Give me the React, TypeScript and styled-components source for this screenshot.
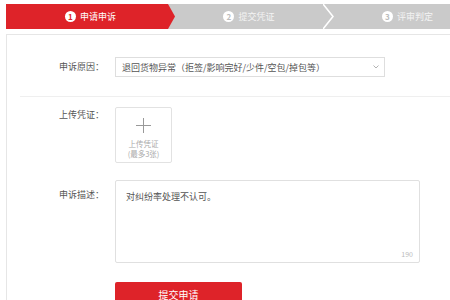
import React from "react";
import styled, { createGlobalStyle } from "styled-components";

const GlobalStyle = createGlobalStyle`
  html, body {
    margin: 0;
    padding: 0;
    background: #fff;
    overflow: hidden;
  }
  body {
    font-family: "Noto Sans CJK SC", "Noto Sans", "Liberation Sans", sans-serif;
    color: #555;
  }
`;

const Page = styled.div`
  width: 450px;
  height: 300px;
  padding: 4px 0 0 6px;
  box-sizing: border-box;
  overflow: hidden;
`;

const StepBar = styled.div`
  display: flex;
  width: 480px;
  height: 25px;
  background: #cacaca;
`;

const Step = styled.div<{ $active?: boolean; $width: number }>`
  display: flex;
  align-items: center;
  justify-content: center;
  gap: 4px;
  flex: 0 0 ${(p) => p.$width}px;
  font-size: 9px;
  color: ${(p) => (p.$active ? "#fff" : "#f4f4f4")};
  background: ${(p) => (p.$active ? "#de2329" : "transparent")};
  ${(p) =>
    p.$active
      ? "clip-path: polygon(0 0, calc(100% - 7px) 0, 100% 50%, calc(100% - 7px) 100%, 0 100%);"
      : ""}
`;

const StepNum = styled.span<{ $active?: boolean }>`
  display: inline-flex;
  align-items: center;
  justify-content: center;
  width: 11px;
  height: 11px;
  border-radius: 50%;
  background: #fff;
  color: ${(p) => (p.$active ? "#de2329" : "#bcbcbc")};
  font-size: 8px;
  font-weight: 700;
  line-height: 1;
`;

const Separator = () => (
  <svg width="11" height="25" viewBox="0 0 11 25" style={{ flex: "0 0 11px" }}>
    <polyline points="0,0 10,12.5 0,25" fill="none" stroke="#fff" strokeWidth="1.6" />
  </svg>
);

const Panel = styled.div`
  margin-top: 5px;
  width: 470px;
  height: 300px;
  border: 1px solid #e6e6e6;
  border-right: none;
  background: #fff;
`;

const Row = styled.div<{ $pt: number; $pb: number }>`
  display: grid;
  grid-template-columns: 97px 1fr;
  column-gap: 11px;
  align-items: start;
  padding: ${(p) => p.$pt}px 0 ${(p) => p.$pb}px;
`;

const Label = styled.div<{ $offset?: number; $lh?: number }>`
  text-align: right;
  font-size: 9px;
  line-height: ${(p) => p.$lh ?? 16}px;
  padding-top: ${(p) => p.$offset ?? 0}px;
  color: #555;
`;

const Divider = styled.div`
  margin-left: 13px;
  height: 1px;
  background: #efefef;
`;

const Select = styled.div`
  display: flex;
  align-items: center;
  justify-content: space-between;
  width: 270px;
  height: 20px;
  box-sizing: border-box;
  padding: 0 5px 0 6px;
  border: 1px solid #dedede;
  font-size: 9px;
  color: #555;
  white-space: nowrap;
`;

const Upload = styled.div`
  display: flex;
  flex-direction: column;
  align-items: center;
  width: 57px;
  height: 56px;
  box-sizing: border-box;
  padding-top: 10px;
  border: 1px solid #e2e2e2;
  border-radius: 2px;
`;

const UploadText = styled.div`
  margin-top: 6px;
  font-size: 7.5px;
  line-height: 10px;
  color: #aaa;
  text-align: center;
`;

const TextArea = styled.div`
  display: flex;
  flex-direction: column;
  justify-content: space-between;
  width: 305px;
  height: 83px;
  box-sizing: border-box;
  padding: 9px 6px 3px 10px;
  border: 1px solid #e0e0e0;
  border-radius: 2px;
  font-size: 9px;
  line-height: 14px;
  color: #555;
`;

const Counter = styled.span`
  align-self: flex-end;
  font-size: 7px;
  line-height: 10px;
  color: #bbb;
`;

const Button = styled.button`
  margin-top: 19px;
  width: 127px;
  height: 24px;
  border: none;
  border-radius: 2px;
  background: #de2329;
  color: #fff;
  font-family: inherit;
  font-size: 10px;
  padding: 0;
`;

const steps = ["申请申诉", "提交凭证", "评审判定"];

export default function App() {
  return (
    <>
      <GlobalStyle />
      <Page>
        <StepBar>
          <Step $active $width={169}>
            <StepNum $active>1</StepNum>
            {steps[0]}
          </Step>
          <Step $width={148}>
            <StepNum>2</StepNum>
            {steps[1]}
          </Step>
          <Separator />
          <Step $width={147}>
            <StepNum>3</StepNum>
            {steps[2]}
          </Step>
        </StepBar>
        <Panel>
          <Row $pt={22} $pb={19}>
            <Label $lh={20}>申诉原因：</Label>
            <Select>
              <span>退回货物异常（拒签/影响完好/少件/空包/掉包等）</span>
              <svg width="6" height="4" viewBox="0 0 6 4">
                <polyline points="0.5,0.5 3,3 5.5,0.5" fill="none" stroke="#aaa" strokeWidth="0.9" />
              </svg>
            </Select>
          </Row>
          <Divider />
          <Row $pt={10} $pb={0}>
            <Label>上传凭证：</Label>
            <Upload>
              <svg width="15" height="15" viewBox="0 0 15 15">
                <path d="M7.5 0V15M0 7.5H15" stroke="#999" strokeWidth="1" />
              </svg>
              <UploadText>
                上传凭证
                <br />
                (最多3张)
              </UploadText>
            </Upload>
          </Row>
          <Row $pt={17} $pb={0}>
            <Label $offset={7}>申诉描述：</Label>
            <div>
              <TextArea>
                <span>对纠纷率处理不认可。</span>
                <Counter>190</Counter>
              </TextArea>
              <Button>提交申请</Button>
            </div>
          </Row>
        </Panel>
      </Page>
    </>
  );
}
